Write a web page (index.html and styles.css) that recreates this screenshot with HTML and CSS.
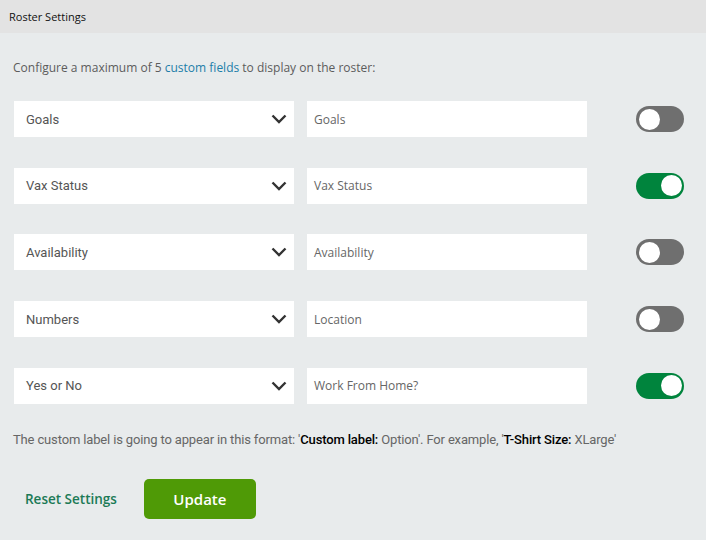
FILE: index.html
```html
<!DOCTYPE html>
<html>
<head>
<meta charset="utf-8">
<link rel="stylesheet" href="styles.css">
</head>
<body>
<div class="header">Roster Settings</div>
<div class="content">
  <p class="intro">Configure a maximum of 5 <a class="link">custom fields</a> to display on the roster:</p>
  <div class="rows">
    <div class="row">
      <div class="select"><span>Goals</span><svg class="chev" width="16" height="10" viewBox="0 0 16 10"><path d="M1.5 1.5 L8 8 L14.5 1.5" fill="none" stroke="#333" stroke-width="2.4"/></svg></div>
      <div class="input">Goals</div>
      <div class="toggle"><div class="knob"></div></div>
    </div>
    <div class="row">
      <div class="select"><span>Vax Status</span><svg class="chev" width="16" height="10" viewBox="0 0 16 10"><path d="M1.5 1.5 L8 8 L14.5 1.5" fill="none" stroke="#333" stroke-width="2.4"/></svg></div>
      <div class="input">Vax Status</div>
      <div class="toggle on"><div class="knob"></div></div>
    </div>
    <div class="row">
      <div class="select"><span>Availability</span><svg class="chev" width="16" height="10" viewBox="0 0 16 10"><path d="M1.5 1.5 L8 8 L14.5 1.5" fill="none" stroke="#333" stroke-width="2.4"/></svg></div>
      <div class="input">Availability</div>
      <div class="toggle"><div class="knob"></div></div>
    </div>
    <div class="row">
      <div class="select"><span>Numbers</span><svg class="chev" width="16" height="10" viewBox="0 0 16 10"><path d="M1.5 1.5 L8 8 L14.5 1.5" fill="none" stroke="#333" stroke-width="2.4"/></svg></div>
      <div class="input">Location</div>
      <div class="toggle"><div class="knob"></div></div>
    </div>
    <div class="row">
      <div class="select"><span>Yes or No</span><svg class="chev" width="16" height="10" viewBox="0 0 16 10"><path d="M1.5 1.5 L8 8 L14.5 1.5" fill="none" stroke="#333" stroke-width="2.4"/></svg></div>
      <div class="input">Work From Home?</div>
      <div class="toggle on"><div class="knob"></div></div>
    </div>
  </div>
  <p class="note">The custom label is going to appear in this format: '<b>Custom label:</b> Option'. For example, '<b>T-Shirt Size:</b> XLarge'</p>
  <div class="actions">
    <a class="reset">Reset Settings</a>
    <button class="update">Update</button>
  </div>
</div>
</body>
</html>
```
FILE: styles.css
```css
html, body {
  margin: 0;
  padding: 0;
  background: #e8ebec;
  width: 706px;
  height: 540px;
  overflow: hidden;
}
body {
  font-family: "Open Sans", "Liberation Sans", sans-serif;
}
.header {
  height: 33px;
  background: #e3e3e3;
  display: flex;
  align-items: center;
  padding-left: 9px;
  font-size: 11px;
  color: #111;
  box-sizing: border-box;
}
.content {
  padding: 0 0 0 13px;
}
.intro {
  margin: 26px 0 0 0;
  font-size: 12px;
  line-height: 18px;
  color: #5c5c5c;
}
.link {
  color: #1d7ea9;
  text-decoration: none;
}
.rows {
  margin-top: 24px;
  display: flex;
  flex-direction: column;
  gap: 30.7px;
}
.row {
  display: flex;
  align-items: center;
  height: 36px;
}
.select {
  margin-left: 1px;
  width: 280px;
  height: 36px;
  background: #fff;
  display: flex;
  align-items: center;
  justify-content: space-between;
  padding: 0 7px 0 12px;
  box-sizing: border-box;
  font-family: Roboto, "Liberation Sans", sans-serif;
  font-size: 13px;
  color: #555;
}
.chev {
  display: block;
}
.input {
  margin-left: 13px;
  width: 280px;
  height: 36px;
  background: #fff;
  display: flex;
  align-items: center;
  padding-left: 7px;
  box-sizing: border-box;
  font-size: 12px;
  color: #666;
}
.toggle {
  margin-left: 49px;
  width: 48px;
  height: 26px;
  border-radius: 13px;
  background: #6f6f6f;
  position: relative;
}
.toggle .knob {
  position: absolute;
  top: 2.5px;
  left: 2.5px;
  width: 21px;
  height: 21px;
  border-radius: 50%;
  background: #fff;
}
.toggle.on {
  background: #00843d;
}
.toggle.on .knob {
  left: 24.5px;
}
.note {
  margin: 27px 0 0 0;
  font-family: Roboto, "Liberation Sans", sans-serif;
  font-size: 13px;
  line-height: 18px;
  color: #666;
  letter-spacing: -0.15px;
}
.note b {
  color: #000;
  font-weight: 500;
}
.actions {
  margin-top: 30px;
  display: flex;
  align-items: center;
}
.reset {
  margin-left: 12px;
  font-size: 13.5px;
  font-weight: 600;
  color: #1b7a56;
}
.update {
  margin-left: 27px;
  width: 112px;
  height: 40px;
  border: none;
  border-radius: 5px;
  background: #4f9a06;
  color: #fff;
  font-family: "Open Sans", "Liberation Sans", sans-serif;
  font-weight: 600;
  font-size: 15px;
}
```
